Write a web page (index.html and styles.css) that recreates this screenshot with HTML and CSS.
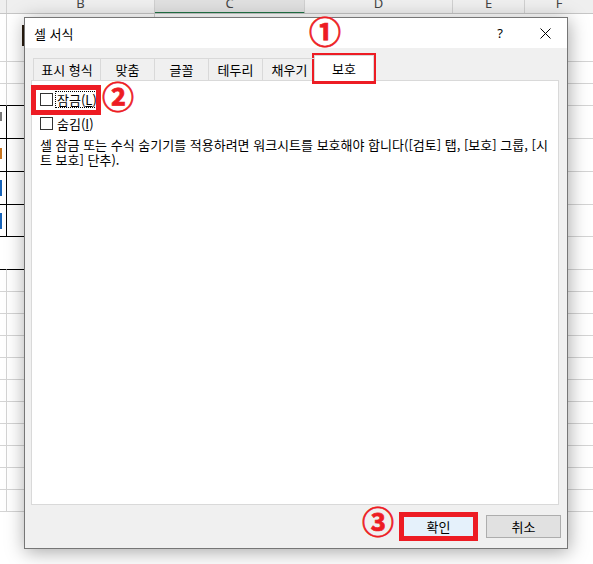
FILE: index.html
```html
<!DOCTYPE html>
<html lang="ko">
<head>
  <meta charset="UTF-8" />
  <title>셀 서식</title>
  <link rel="stylesheet" href="styles.css">
</head>
<body>
  <div class="sheet">
    <div class="sheet-head">
      <div class="hcell col-a"></div>
      <div class="hcell col-b">B</div>
      <div class="hcell col-c selected">C</div>
      <div class="hcell col-d">D</div>
      <div class="hcell col-e">E</div>
      <div class="hcell col-f">F</div>
    </div>

    <div class="row h48"><div class="a"></div><div class="b"><span class="edge"></span></div><div class="rest"></div></div>
    <div class="row h22"><div class="a"></div><div class="b"></div><div class="rest"></div></div>
    <div class="row h22 tb"><div class="a"></div><div class="b"></div><div class="rest"></div></div>
    <div class="row h33 tb tv"><div class="a"><span class="frag dark"></span></div><div class="b"></div><div class="rest"></div></div>
    <div class="row h33 tb tv"><div class="a"><span class="frag orange"></span></div><div class="b"></div><div class="rest"></div></div>
    <div class="row h33 tb tv"><div class="a"><span class="frag blue"></span></div><div class="b"></div><div class="rest"></div></div>
    <div class="row h32 tb tv"><div class="a"><span class="frag blue"></span></div><div class="b"></div><div class="rest"></div></div>
    <div class="row h33 tb mg"><div class="a"></div><div class="b"></div><div class="rest"></div></div>
    <div class="row h22"><div class="a"></div><div class="b"></div><div class="rest"></div></div>
    <div class="row h22"><div class="a"></div><div class="b"></div><div class="rest"></div></div>
    <div class="row h22"><div class="a"></div><div class="b"></div><div class="rest"></div></div>
    <div class="row h22"><div class="a"></div><div class="b"></div><div class="rest"></div></div>
    <div class="row h22"><div class="a"></div><div class="b"></div><div class="rest"></div></div>
    <div class="row h22"><div class="a"></div><div class="b"></div><div class="rest"></div></div>
    <div class="row h22"><div class="a"></div><div class="b"></div><div class="rest"></div></div>
    <div class="row h22"><div class="a"></div><div class="b"></div><div class="rest"></div></div>
    <div class="row h22"><div class="a"></div><div class="b"></div><div class="rest"></div></div>
    <div class="row h22"><div class="a"></div><div class="b"></div><div class="rest"></div></div>
    <div class="row h22"><div class="a"></div><div class="b"></div><div class="rest"></div></div>
  </div>

  <div class="dialog">
    <div class="titlebar">
      <span class="title">셀 서식</span>
      <span class="help">?</span>
      <svg class="close" width="11" height="11" viewBox="0 0 11 11">
        <path d="M0.5 0.5 L10.5 10.5 M10.5 0.5 L0.5 10.5" stroke="#000" stroke-width="1" fill="none"/>
      </svg>
    </div>

    <div class="dialog-body">
      <div class="tabs">
        <div class="tab wide">표시 형식</div>
        <div class="tab">맞춤</div>
        <div class="tab">글꼴</div>
        <div class="tab">테두리</div>
        <div class="tab">채우기</div>
        <div class="tab active">보호</div>
      </div>

      <div class="panel">
        <label class="check"><span class="box"></span><span class="lbl focus">잠금(<u>L</u>)</span></label>
        <label class="check"><span class="box"></span><span class="lbl">숨김(<u>I</u>)</span></label>
        <p class="note">셀 잠금 또는 수식 숨기기를 적용하려면 워크시트를 보호해야 합니다([검토] 탭, [보호] 그룹, [시<br>트 보호] 단추).</p>
      </div>

      <div class="buttons">
        <button class="btn primary">확인</button>
        <button class="btn">취소</button>
      </div>
    </div>
  </div>

  <!-- annotation marks -->
  <div class="mark mark-tab"></div>
  <div class="mark mark-check"></div>
  <div class="mark mark-ok"></div>
  <span class="num num-1">①</span>
  <span class="num num-2">②</span>
  <span class="num num-3">③</span>
</body>
</html>
```

FILE: styles.css
```css
body {
  margin: 0;
  width: 593px;
  height: 564px;
  overflow: hidden;
  position: relative;
  background: #fff;
  font-family: "Noto Sans CJK KR", "Noto Sans", sans-serif;
  font-size: 13px;
  color: #000;
}

/* spreadsheet behind the dialog */
.sheet-head {
  display: flex;
  height: 14px;
  box-sizing: border-box;
  background: #efefef;
  border-bottom: 1px solid #c6c6c6;
  overflow: hidden;
}

.hcell {
  box-sizing: border-box;
  border-right: 1px solid #d0d0d0;
  text-align: center;
  font-family: "Noto Sans", sans-serif;
  font-size: 13px;
  line-height: 14px;
  margin-top: -4px;
  height: 18px;
  color: #444;
}

.hcell.selected {
  background: #e0e0e0;
  border-bottom: 2px solid #217346;
}

.col-a { width: 7px; }
.col-b { width: 148px; }
.col-c { width: 150px; }
.col-d { width: 148px; }
.col-e { width: 72px; }
.col-f { flex: 1; border-right: none; }

.row {
  display: flex;
}

.row > div {
  box-sizing: border-box;
  border-bottom: 1px solid #d4d4d4;
}

.h48 { height: 48px; }
.h22 { height: 22px; }
.h32 { height: 32px; }
.h33 { height: 33px; }

.a {
  width: 7px;
  border-right: 1px solid #d4d4d4;
}

.b {
  width: 148px;
  border-right: 1px solid #d4d4d4;
}

.rest {
  flex: 1;
}

.tb .a,
.tb .b {
  border-bottom-color: #000;
}

.tv .a {
  border-right-color: #000;
}

.mg .a {
  border-right-color: transparent;
}

.edge {
  display: block;
  width: 2px;
  height: 21px;
  margin: 11px 0 0 15px;
  background: #2a1d10;
}

.frag {
  display: block;
  width: 2px;
}

.frag.dark {
  height: 9px;
  margin-top: 6px;
  background: #777;
}

.frag.orange {
  height: 11px;
  margin-top: 9px;
  background: #c8741e;
}

.frag.blue {
  height: 16px;
  margin-top: 8px;
  background: #1763b8;
}

/* dialog */
.dialog {
  position: absolute;
  left: 24px;
  top: 17px;
  width: 544px;
  height: 532px;
  box-sizing: border-box;
  border: 1px solid #767676;
  background: #f0f0f0;
  box-shadow: 1px 3px 18px rgba(0, 0, 0, 0.35);
}

.titlebar {
  height: 30px;
  background: #fff;
  display: flex;
  align-items: center;
  padding-left: 9px;
}

.help {
  margin-left: auto;
  font-family: "Noto Sans", sans-serif;
  font-size: 13px;
}

.close {
  margin: 0 16px 0 37px;
}

.dialog-body {
  padding: 7px 8px 0 6px;
}

.tabs {
  display: flex;
  align-items: flex-end;
  height: 25px;
  padding-left: 2px;
  position: relative;
  z-index: 1;
}

.tab {
  width: 55px;
  height: 22px;
  box-sizing: border-box;
  border: 1px solid #d9d9d9;
  border-bottom: none;
  margin-right: -1px;
  text-align: center;
  line-height: 21px;
}

.tab.wide {
  width: 68px;
}

.tab.active {
  width: 60px;
  height: 26px;
  margin: 0 0 -1px -2px;
  background: #fff;
  line-height: 25px;
}

.panel {
  height: 425px;
  box-sizing: border-box;
  border: 1px solid #d9d9d9;
  background: #fff;
  padding: 12px 8px 0;
}

.check {
  display: flex;
  align-items: center;
  gap: 2px;
  height: 13px;
}

.check + .check {
  margin-top: 11px;
}

.box {
  width: 13px;
  height: 13px;
  box-sizing: border-box;
  border: 1px solid #333;
  background: #fff;
}

.lbl {
  border: 1px dotted transparent;
  padding: 0 1px;
  line-height: 15px;
}

.lbl.focus {
  border-color: #000;
}

.note {
  margin: 7px 0 0;
  line-height: 15px;
  white-space: nowrap;
}

.buttons {
  display: flex;
  justify-content: flex-end;
  gap: 10px;
  padding-top: 10px;
  margin-right: -2px;
}

.btn {
  width: 75px;
  height: 23px;
  border: 1px solid #adadad;
  background: #e1e1e1;
  font-family: inherit;
  font-size: 13px;
  padding: 0;
}

.btn.primary {
  border-color: #0078d7;
  background: #e5f1fb;
}

/* red annotation overlays */
.mark {
  position: absolute;
  box-sizing: border-box;
  border: 5px solid #ed1c24;
}

.mark-tab { left: 312px; top: 53px; width: 64px; height: 31px; }
.mark-check { left: 31px; top: 85px; width: 70px; height: 30px; }
.mark-ok { left: 399px; top: 512px; width: 79px; height: 29px; }

.num {
  position: absolute;
  color: #ed1c24;
  font-weight: bold;
  font-size: 32px;
  line-height: 27px;
  -webkit-text-stroke: 0.7px #ed1c24;
}

.num-1 { left: 309px; top: 17px; }
.num-2 { left: 102px; top: 82px; }
.num-3 { left: 362px; top: 507px; }
```
